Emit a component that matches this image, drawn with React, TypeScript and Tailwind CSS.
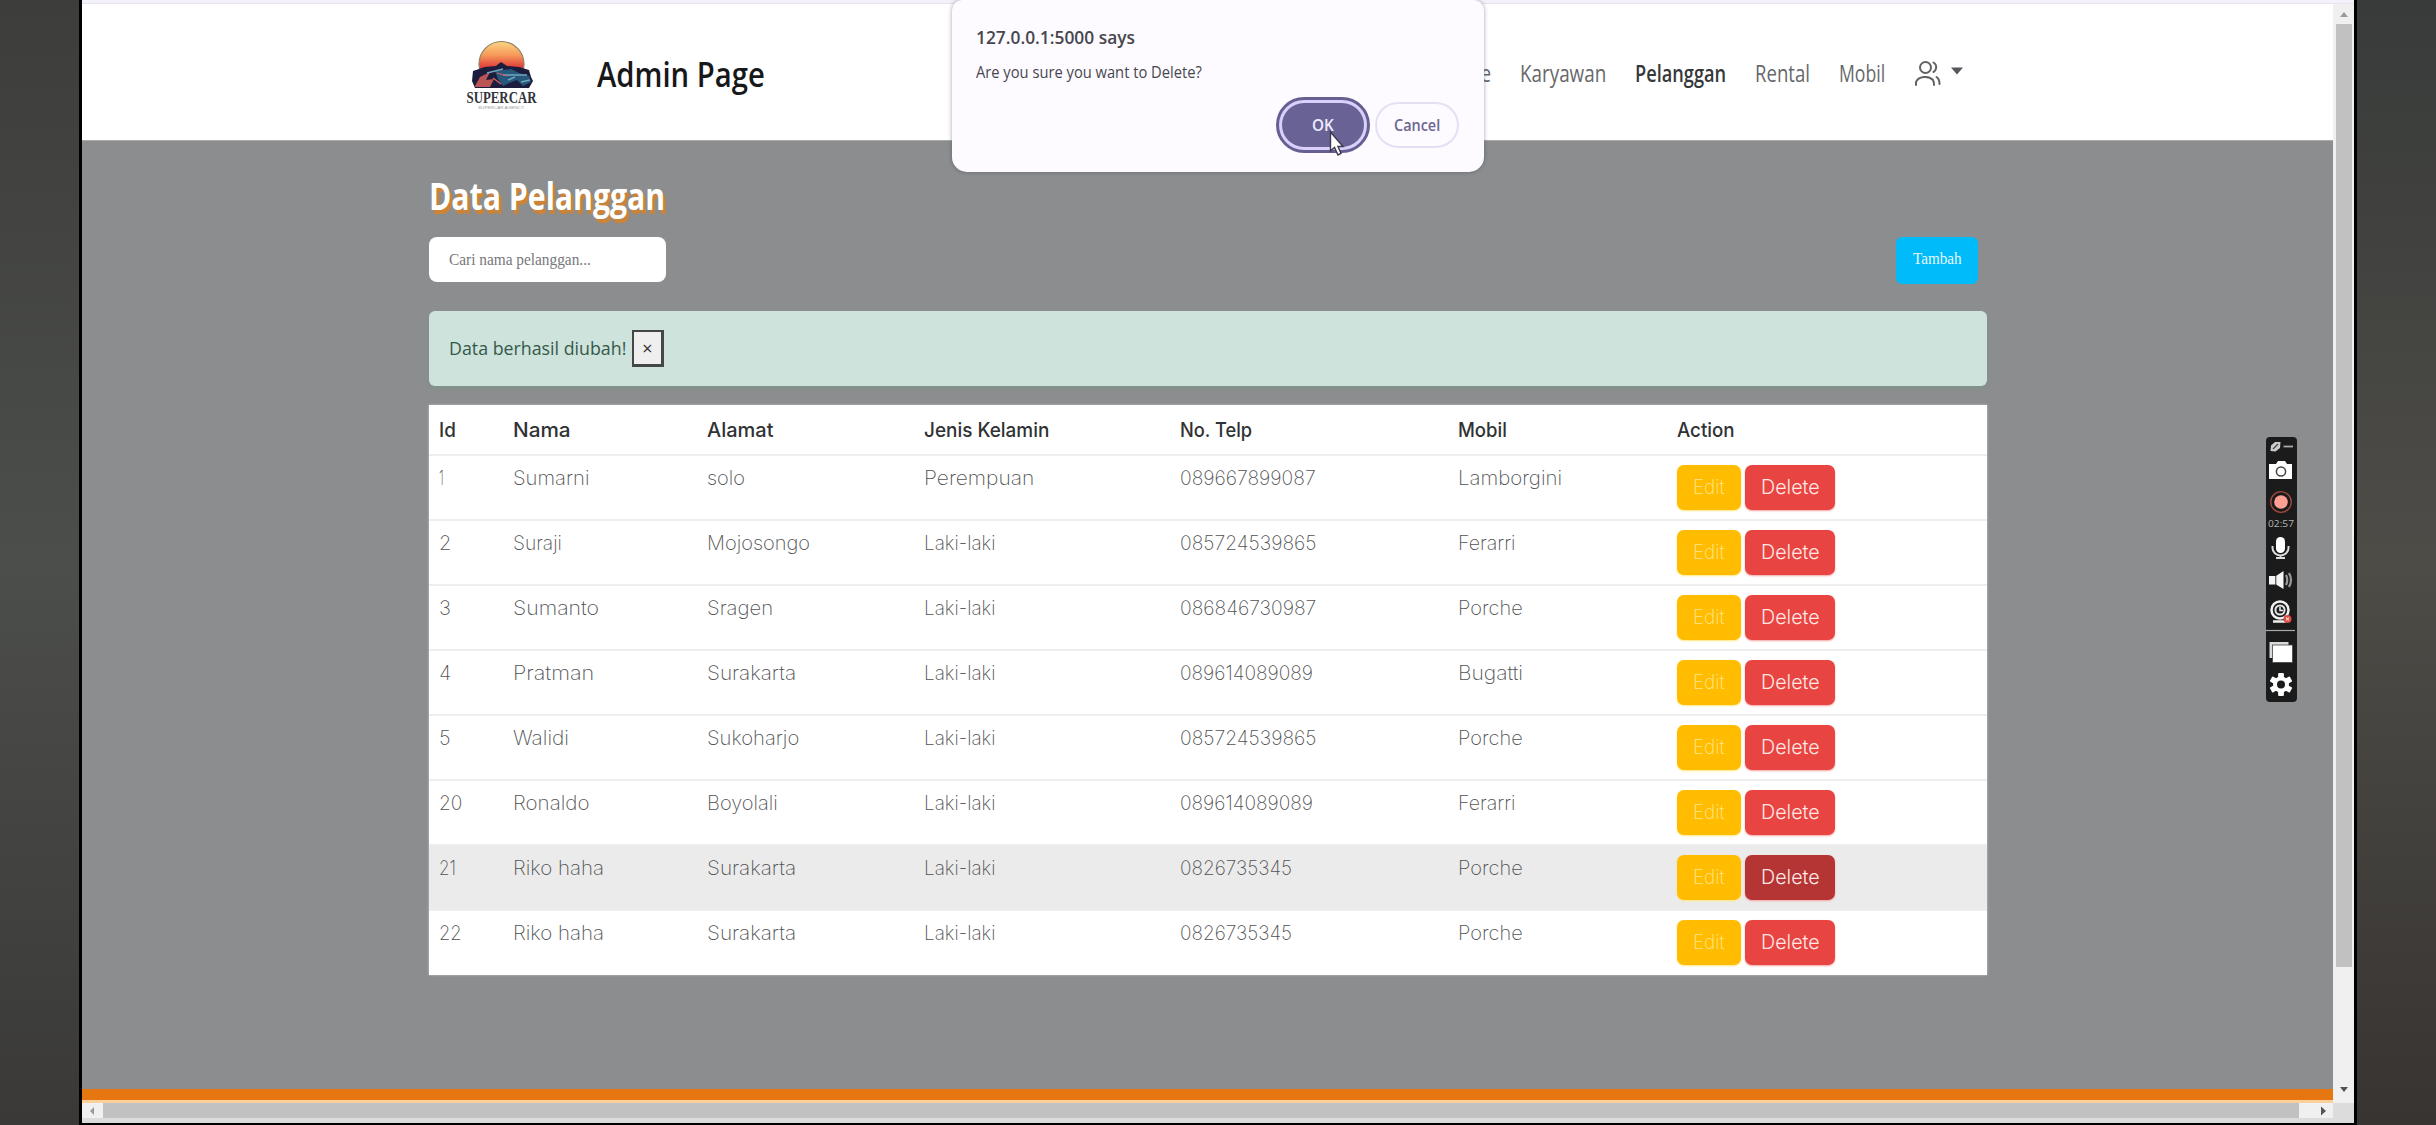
import { useLayoutEffect, useRef, useState } from "react";
import type { ReactNode } from "react";

/** Single line of text condensed or widened to a set width. */
function Fit({ w, className = "", children }: { w: number; className?: string; children: ReactNode }) {
  const ref = useRef<HTMLSpanElement>(null);
  const [k, setK] = useState(1);
  useLayoutEffect(() => {
    if (ref.current && ref.current.offsetWidth) setK(w / ref.current.offsetWidth);
  }, [w]);
  return (
    <span className={`block shrink-0 ${className}`} style={{ width: w }}>
      <span ref={ref} className="inline-block origin-left whitespace-nowrap" style={{ transform: k === 1 ? undefined : `scaleX(${k})` }}>
        {children}
      </span>
    </span>
  );
}

type Cell = [string, number];
const heads: Cell[] = [["Id", 17], ["Nama", 58], ["Alamat", 67], ["Jenis Kelamin", 125], ["No. Telp", 72], ["Mobil", 49], ["Action", 58]];
const laki: Cell = ["Laki-laki", 71];
const sura: Cell = ["Surakarta", 89];
const porche: Cell = ["Porche", 65];
const rows: Cell[][] = [
  [["1", 5], ["Sumarni", 77], ["solo", 38], ["Perempuan", 110], ["089667899087", 136], ["Lamborgini", 104]],
  [["2", 12], ["Suraji", 49], ["Mojosongo", 103], laki, ["085724539865", 136], ["Ferarri", 57]],
  [["3", 12], ["Sumanto", 86], ["Sragen", 66], laki, ["086846730987", 136], porche],
  [["4", 12], ["Pratman", 81], sura, laki, ["089614089089", 133], ["Bugatti", 65]],
  [["5", 12], ["Walidi", 56], ["Sukoharjo", 92], laki, ["085724539865", 136], porche],
  [["20", 23], ["Ronaldo", 77], ["Boyolali", 71], laki, ["089614089089", 133], ["Ferarri", 57]],
  [["21", 17], ["Riko haha", 91], sura, laki, ["0826735345", 112], porche],
  [["22", 23], ["Riko haha", 91], sura, laki, ["0826735345", 112], porche],
];
const grid = "grid grid-cols-[74px_194px_217px_256px_278px_219px_1fr] pl-[10px]";

function Logo() {
  return (
    <svg width="74" height="76" viewBox="0 0 74 76" className="block">
      <defs>
        <linearGradient id="sun" x1="0" y1="0" x2="0" y2="1">
          <stop offset="0" stopColor="#fbd683" />
          <stop offset=".3" stopColor="#f79a5a" />
          <stop offset=".55" stopColor="#e2453c" />
          <stop offset=".75" stopColor="#7c2440" />
        </linearGradient>
      </defs>
      <circle cx="36.5" cy="26" r="22.5" fill="url(#sun)" stroke="#8d7f63" strokeWidth="1.2" />
      <path d="M8 33 L20 29 L31 28 L36 24 L42 28 L54 29 L64 32 L66 39 L68 43 L64 50 H10 L7 43Z" fill="#1c1c3c" />
      <path d="M10 48 L15 39 L25 34 L21 42 L29 41 L25 49 H10Z" fill="#b95552" />
      <path d="M30 33 L46 31 L54 35 L64 38 L66 44 L58 48 L52 42 L44 45 L38 48 L33 41Z" fill="#28577c" />
      <path d="M22 35 L38 31 M38 37 L62 37 M43 42 L50 39 M56 44 L65 42" stroke="#6fa5bd" strokeWidth="1.4" />
      <path d="M32 35 L42 38 M28 40 L36 46" stroke="#cf6463" strokeWidth="1.3" />
      <text x="1.500" y="64.500" textLength="70" lengthAdjust="spacingAndGlyphs" fontFamily="Liberation Serif" fontWeight="700" fontSize="17.500" fill="#34343a">SUPERCAR</text>
      <text x="13" y="70.500" textLength="46" lengthAdjust="spacingAndGlyphs" fontFamily="Liberation Sans" fontSize="4" fill="#999">SUPERCAR AGENCY</text>
    </svg>
  );
}

function RecorderBar() {
  return (
    <div className="absolute left-[2266px] top-[437px] h-[265px] w-[31px] rounded-[4px] bg-[#1b1b1b]">
      <svg width="31" height="265" viewBox="0 0 31 265" className="block" fill="none">
        <path d="M4.500 14 L5 8.500 L9 5 L14.500 5 L14 11 L9.500 14.500Z" fill="#ccc" />
        <path d="M7 12 L12 7" stroke="#444" strokeWidth="1.200" />
        <path d="M17.500 9.500 H27" stroke="#aaa" strokeWidth="1.800" />
        <path d="M3 27 H10 L12 24 H19 L21 27 H26 V42 H3Z" fill="#fff" />
        <circle cx="15" cy="34.500" r="4.600" fill="#fff" stroke="#444" strokeWidth="1.500" />
        <circle cx="15" cy="65" r="10.300" stroke="#a04a41" strokeWidth="1.300" />
        <circle cx="15" cy="65" r="6.800" fill="#ff9f93" />
        <text x="2" y="90" textLength="26" lengthAdjust="spacingAndGlyphs" fontSize="9.500" fontFamily="Open Sans" fill="#b5b5b5">02:57</text>
        <rect x="10" y="100" width="9" height="16" rx="4.500" fill="#fff" />
        <path d="M6.500 109 V111 A8 7.500 0 0 0 22.500 111 V109 M14.500 118 V121 M10 121 H19" stroke="#ddd" strokeWidth="2" />
        <path d="M3 139 H10 L17.500 134 V152 L10 147.500 H3Z" fill="#f5f5f5" />
        <path d="M9.800 139 V148" stroke="#1b1b1b" strokeWidth=".9" />
        <path d="M20 138 Q22.500 143 20 148 M23 136 Q27 143 23 150" stroke="#999" strokeWidth="2.200" />
        <circle cx="14" cy="173" r="8.500" stroke="#f2f2f2" strokeWidth="2.500" />
        <circle cx="14" cy="173" r="4.600" stroke="#e5e5e5" strokeWidth="2" />
        <path d="M14 170 V173.500 H17" stroke="#eee" strokeWidth="1.500" />
        <path d="M7 184.500 H20" stroke="#eee" strokeWidth="2.500" />
        <circle cx="21.500" cy="182" r="4" fill="#d94a45" />
        <path d="M20 180.500 L23 183.500 M23 180.500 L20 183.500" stroke="#ffc4c0" strokeWidth="1.100" />
        <path d="M0 193.500 H29" stroke="#a8a8a8" strokeWidth="1.200" />
        <rect x="3.500" y="205" width="19" height="16" fill="#d9d9d9" />
        <rect x="6.500" y="208" width="20" height="17.500" fill="#fff" stroke="#444" strokeWidth=".8" />
        <g fill="#fff" transform="translate(15 247.500)">
          <circle r="8" />
          <rect x="-2.900" y="-11.500" width="5.800" height="23" rx="1" />
          <rect x="-2.900" y="-11.500" width="5.800" height="23" rx="1" transform="rotate(60)" />
          <rect x="-2.900" y="-11.500" width="5.800" height="23" rx="1" transform="rotate(120)" />
          <circle r="4" fill="#1b1b1b" />
        </g>
      </svg>
    </div>
  );
}

function Dialog() {
  return (
    <div className="absolute left-[952px] top-0 h-[172px] w-[532px] rounded-b-[15px] rounded-t-[10px] bg-[#fdfbff] pl-[24px] pt-[25px] font-['Open_Sans'] text-[#47464d] shadow-[0_0_4px_rgba(60,50,80,.45)]">
      <Fit w={159} className="h-[25px] text-[18px] font-semibold leading-[25px]">127.0.0.1:5000 says</Fit>
      <Fit w={226} className="mt-[11px] h-[23px] text-[16px] leading-[23px]">Are you sure you want to Delete?</Fit>
      <div className="mt-[13px] flex items-center justify-end gap-[5px] pr-[25px]">
        <button className="h-[56px] w-[94px] rounded-full border-[3px] border-[#665f91] bg-[#d9d0fb] p-[3px]">
          <span className="flex h-full items-center justify-center rounded-full bg-[#696295] text-[16px] font-semibold text-[#eeebff]">
            <Fit w={22}>OK</Fit>
          </span>
        </button>
        <button className="flex h-[46px] w-[84px] items-center justify-center rounded-full border-2 border-[#e6dff3] text-[16px] font-semibold text-[#6d6691]">
          <Fit w={46}>Cancel</Fit>
        </button>
      </div>
      <svg className="absolute left-[377px] top-[130px]" width="16" height="27" viewBox="0 0 16 27">
        <path d="M1.500 2 V21 L5.500 17.500 L9 25 L12 23.500 L9 16.500 H14Z" fill="#fff" stroke="#3c3850" strokeWidth="1.400" />
      </svg>
    </div>
  );
}

export default function App() {
  return (
    <div className="relative flex h-[1125px] w-[2436px] overflow-hidden bg-black font-['Open_Sans',sans-serif]">
      <div className="w-[79px] bg-linear-to-b from-[#3d3e3c] via-[#4c4e4c] to-[#3a3938]" />
      <div className="ml-[3px] flex h-[1123px] w-[2272px] flex-col bg-[#dcdcdc]">
        <div className="h-[4px] border-b border-[#e9e3f0] bg-[#f5f1fa]" />
        <div className="flex h-[1099px]">
          <div className="flex w-[2251px] flex-col bg-[#8b8d8e]">
            <header className="flex h-[137px] items-center border-b border-[#aaa] bg-white">
              <div className="ml-[383px] mt-[8px] w-[132px]"><Logo /></div>
              <Fit w={168} className="mt-[3px] text-[35px] font-semibold leading-[50px] text-[#17181a]">Admin Page</Fit>
              <nav className="mt-px ml-[674px] flex items-center gap-[29px] text-[23px] leading-[32px] text-[#66686a]">
                <Fit w={52}>Home</Fit>
                <Fit w={86}>Karyawan</Fit>
                <Fit w={91} className="font-semibold text-[#36383a]">Pelanggan</Fit>
                <Fit w={55}>Rental</Fit>
                <Fit w={46}>Mobil</Fit>
                <span className="flex items-center gap-[10px]">
                  <svg width="27" height="27" viewBox="0 0 27 27" fill="none" stroke="#606264" strokeWidth="2" strokeLinecap="round" className="mt-px">
                    <circle cx="11.500" cy="7.500" r="5.500" />
                    <path d="M2 25 V22 A9.500 7 0 0 1 19 20 Q20 22 20 25 M19.500 2.500 Q23 5 22 8.500 Q21.500 11 19.500 12 M22.500 17 Q25.500 19 25.500 24" />
                  </svg>
                  <svg width="12" height="8" viewBox="0 0 12 8" className="-mt-[4px]"><path d="M0 0.500H12L6 7.500Z" fill="#55575a" /></svg>
                </span>
              </nav>
            </header>
            <main className="ml-[347px] flex h-[948px] w-[1558px] flex-col">
              <Fit w={236} className="mt-[29px] h-[52px] text-[37px] font-bold leading-[52px] text-white [text-shadow:3px_4px_1px_#cf8335]">Data Pelanggan</Fit>
              <div className="mt-[15px] flex items-start justify-between pr-[9px]">
                <div className="h-[45px] w-[237px] rounded-[8px] bg-white pl-[20px] pt-[9px] text-[#77777b]">
                  <Fit w={142} className="font-['Liberation_Serif'] text-[17.5px] leading-[26px]">Cari nama pelanggan...</Fit>
                </div>
                <div className="flex h-[47px] w-[82px] justify-center rounded-[6px] bg-[#00bbf9] pt-[9px] text-[#e5f8ff]">
                  <Fit w={49} className="font-['Liberation_Serif'] text-[17px] leading-[26px]">Tambah</Fit>
                </div>
              </div>
              <div className="mt-[27px] flex h-[75px] items-center rounded-[6px] bg-[#cee3db] pl-[20px] shadow-[0_2px_2px_#7f948c]">
                <Fit w={177} className="text-[19px] text-[#35594b]">Data berhasil diubah!</Fit>
                <button className="ml-[6px] flex h-[37px] w-[32px] items-center justify-center border-2 border-r-[3px] border-b-[3px] border-[#454747] bg-[#efefef] text-[18px] leading-none text-[#333]">×</button>
              </div>
              <section className="mt-[19px] h-[570px] bg-white font-['Inter'] text-[20px] shadow-[0_0_2px_#ccc]">
                <div className={`${grid} h-[49px] pt-[10px] font-medium leading-[30px] text-[#303234]`}>
                  {heads.map(([t, w]) => <Fit key={t} w={w}>{t}</Fit>)}
                </div>
                {rows.map((row, i) => (
                  <div key={i} className={`${grid} h-[65px] border-t-2 border-[#eeeeef] font-extralight leading-[30px] text-[#505254] ${i === 6 ? "bg-[#ebebeb]" : ""}`}>
                    {row.map(([t, w], j) => <Fit key={j} w={w} className="mt-[7px]">{t}</Fit>)}
                    <div className="mt-[9px] flex h-[45px] gap-[4px]">
                      <button className="flex w-[64px] justify-center rounded-[7px] bg-[#ffbc00] pt-[7px] text-[#ffe78f] shadow-[0_1px_2px_#ffe680]"><Fit w={32}>Edit</Fit></button>
                      <button className={`flex w-[90px] justify-center rounded-[7px] pt-[7px] font-light text-[#ffe8e6] shadow-[0_1px_2px_#f4a5a2] ${i === 6 ? "bg-[#b53434]" : "bg-[#e84441]"}`}><Fit w={59}>Delete</Fit></button>
                    </div>
                  </div>
                ))}
              </section>
            </main>
            <div className="h-[11px] bg-[#e67710]" />
            <div className="h-[3px] bg-[#fad09b]" />
          </div>
          <div className="flex w-[21px] flex-col items-center bg-[#f0f0f0]">
            <svg width="8" height="5" viewBox="0 0 8 5" className="mt-[8px]"><path d="M0 5L4 0L8 5Z" fill="#999" /></svg>
            <div className="mt-[7px] h-[943px] w-[16px] bg-[#c1c1c1]" />
            <svg width="8" height="5" viewBox="0 0 8 5" className="mt-[120px]"><path d="M0 0H8L4 5Z" fill="#555" /></svg>
          </div>
        </div>
        <div className="flex h-[15px] w-[2251px] items-center bg-[#f0f0f0]">
          <svg width="21" height="10" viewBox="0 0 21 10"><path d="M12 1V9L8 5Z" fill="#999" /></svg>
          <div className="h-[15px] w-[2196px] bg-[#c1c1c1]" />
          <svg width="32" height="10" viewBox="0 0 32 10" className="ml-[2px]"><path d="M20 0.500V9.500L25 5Z" fill="#555" /></svg>
        </div>
      </div>
      <div className="ml-[3px] flex-1 bg-linear-to-b from-[#383b3a] via-[#4e4c47] to-[#373431]" />
      <Dialog />
      <RecorderBar />
    </div>
  );
}
